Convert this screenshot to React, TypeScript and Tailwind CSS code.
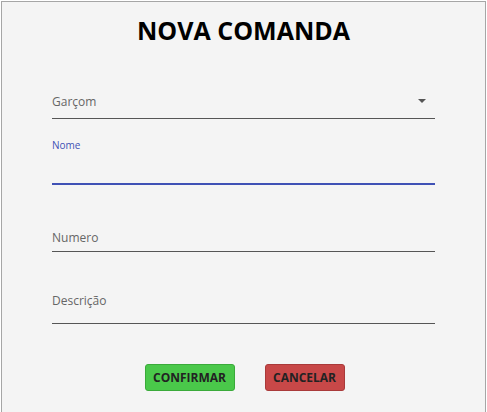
import React from 'react';

const font = { fontFamily: '"Open Sans", "Noto Sans", sans-serif' };

const App = () => {
  return (
    <div className="w-[487px] h-[412px] bg-white overflow-hidden pt-px pl-px" style={font}>
      {/* Dialog */}
      <div className="w-[485px] h-[420px] bg-[#f4f4f4] border border-[#a6a6a6] flex flex-col">
        <h1 className="mt-[12px] text-center text-[25px] leading-[32px] font-bold text-black">
          NOVA COMANDA
        </h1>

        <div className="pl-[50px] w-[433px] flex flex-col">
          {/* Garçom select */}
          <div className="mt-[46px] h-[27px] border-b border-[#555] flex justify-between items-start">
            <span className="mt-[2px] text-[12px] leading-[16px] text-[#666]">Garçom</span>
            <span className="mt-[7px] mr-[9px] w-0 h-0 border-l-[4px] border-r-[4px] border-t-[4px] border-l-transparent border-r-transparent border-t-[#555]" />
          </div>

          {/* Nome (focused) */}
          <div className="mt-[18px] flex flex-col">
            <span className="mt-px text-[10px] leading-[14px] text-[#3f51b5]">Nome</span>
            <div className="h-[33px] border-b-2 border-[#3f51b5]" />
          </div>

          {/* Numero */}
          <div className="mt-[44px] h-[23px] border-b border-[#555]">
            <span className="block mt-px text-[12px] leading-[16px] text-[#666]">Numero</span>
          </div>

          {/* Descrição */}
          <div className="mt-[39px] h-[33px] border-b border-[#555]">
            <span className="block mt-[2px] text-[12px] leading-[16px] text-[#666]">Descrição</span>
          </div>
        </div>

        {/* Buttons */}
        <div className="mt-[40px] flex justify-center gap-[30px] pl-[2px]">
          <button className="w-[90px] h-[27px] rounded-[3px] bg-[#4ac84a] border border-[#3aaa3a] text-[12px] font-bold text-[#222]">
            CONFIRMAR
          </button>
          <button className="w-[80px] h-[27px] rounded-[3px] bg-[#c84848] border border-[#a93a3a] text-[12px] font-bold text-[#222]">
            CANCELAR
          </button>
        </div>
      </div>
    </div>
  );
};

export default App;
